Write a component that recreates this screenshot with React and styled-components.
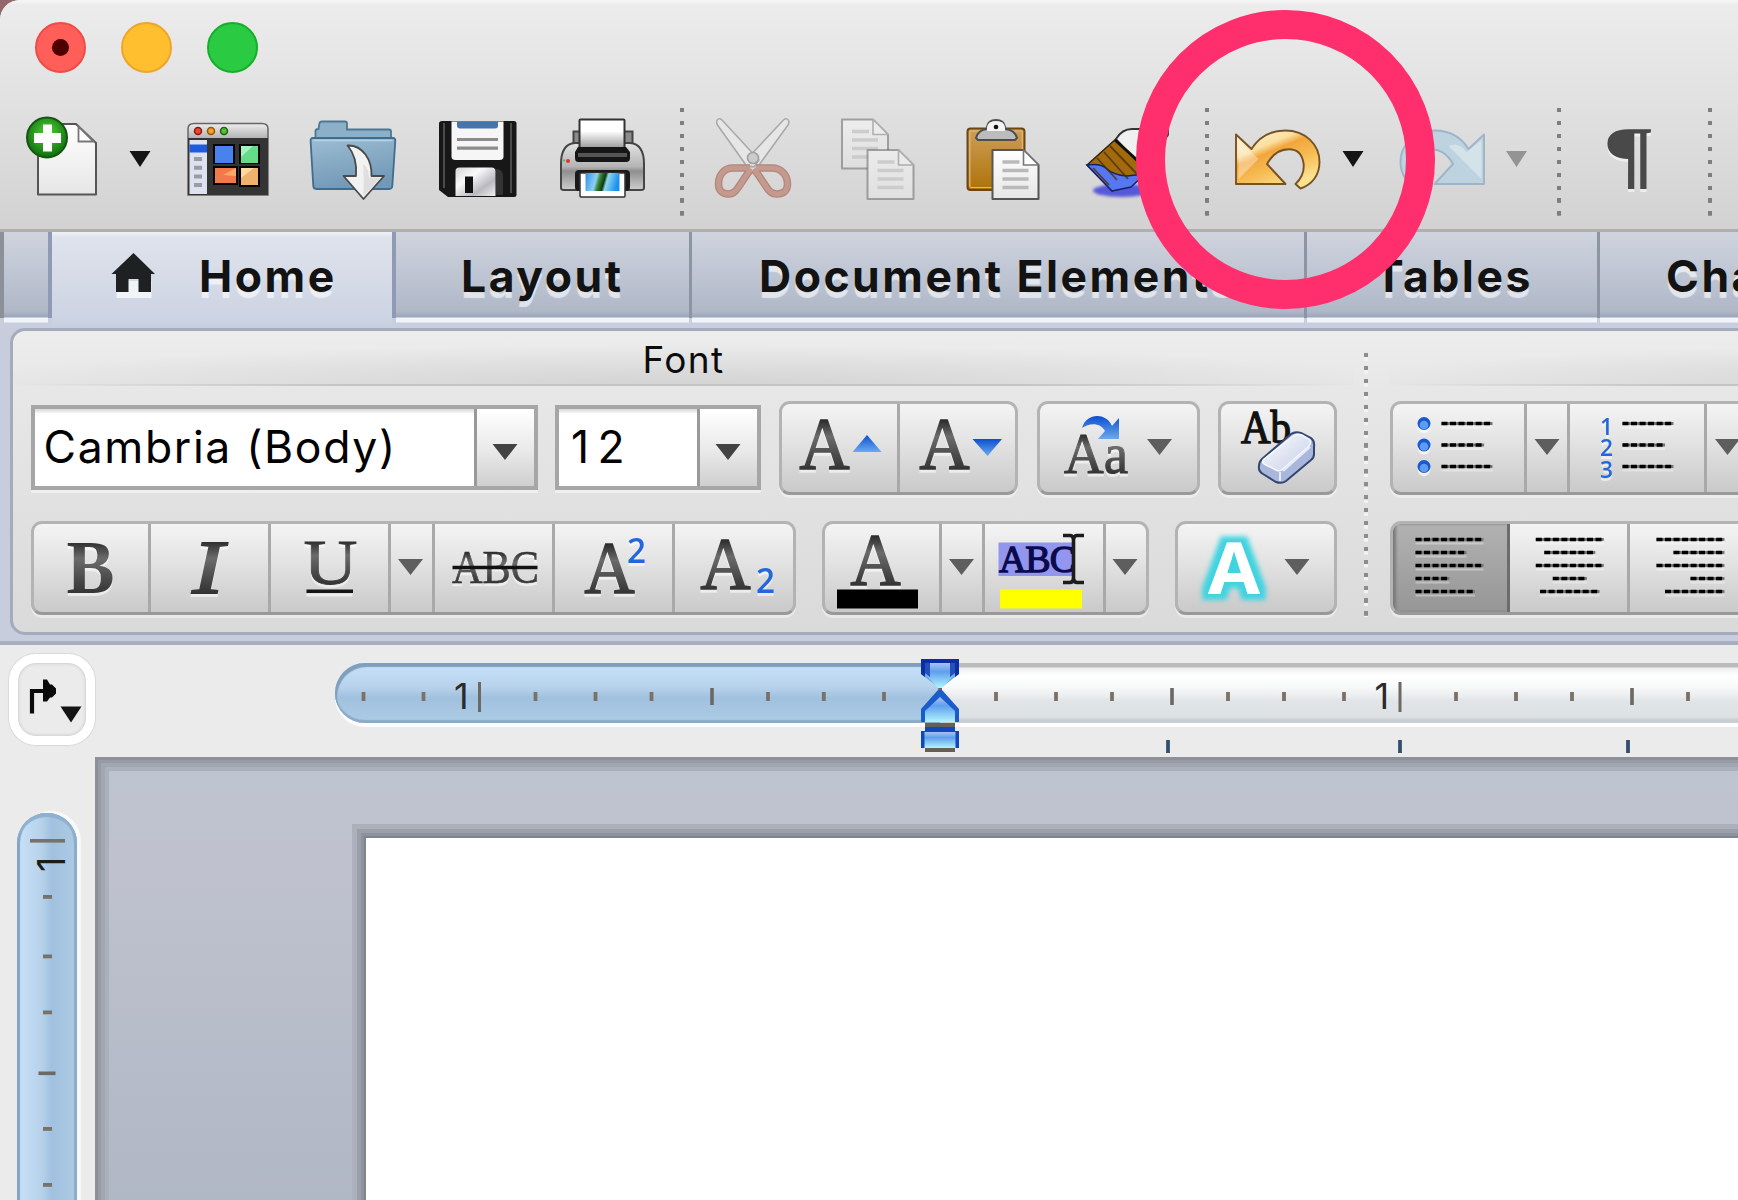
import React from "react";
import styled, { createGlobalStyle } from "styled-components";

const Global = createGlobalStyle`
  html, body { margin: 0; padding: 0; overflow: hidden; }
  *, *::before, *::after { box-sizing: border-box; }
`;

const SERIF = '"Liberation Serif", serif';
const SANS = 'Inter, "Liberation Sans", sans-serif';

const Desktop = styled.div`
  width: 1738px;
  height: 1200px;
  overflow: hidden;
  position: relative;
  background: #93686a;
  font-family: ${SANS};
`;

const Window = styled.div`
  display: flex;
  flex-direction: column;
  width: 1738px;
  height: 1200px;
  overflow: hidden;
  background: #ebebeb;
  border-top-left-radius: 20px;
`;

const Chrome = styled.header`
  flex: none;
  height: 232px;
  background: linear-gradient(#f6f6f6 0, #ececec 5px, #e2e2e2 95px, #d2d2d2 230px);
  border-bottom: 3px solid #b1afab;
`;

const TrafficLights = styled.div`
  display: flex;
  gap: 35px;
  height: 95px;
  padding: 22px 0 0 34.5px;
`;

const Light = styled.div`
  display: flex;
  align-items: center;
  justify-content: center;
  width: 51px;
  height: 51px;
  border-radius: 50%;
  background: ${(p) => p.$fill};
  border: 2px solid ${(p) => p.$edge};
`;

const EditedDot = styled.div`
  width: 17px;
  height: 17px;
  border-radius: 50%;
  background: #4c0000;
`;

const ToolRow = styled.div`
  display: flex;
  height: 134px;
`;

const Drawing = styled.svg`
  display: block;
  flex: none;
  margin-left: ${(p) => p.$gap || 0}px;
  overflow: visible;
`;

/* An icon drawn in window coordinates, cropped to its own slot. */
function Art({ x, y, w, h, gap, children }) {
  return (
    <Drawing $gap={gap} width={w} height={h} viewBox={`${x} ${y} ${w} ${h}`}>
      {children}
    </Drawing>
  );
}

const Dots = styled.div`
  flex: none;
  width: 4px;
  height: ${(p) => p.$h}px;
  margin: ${(p) => p.$top}px 0 0 ${(p) => p.$gap}px;
  background: repeating-linear-gradient(
    ${(p) => p.$ink} 0 4px,
    ${(p) => p.$between} 4.5px 7.5px,
    transparent 8px 12.92px
  );
`;

const Caret = ({ x, y, w = 25, h = 16, fill = "#5e5e5e" }) => (
  <path d={`M${x - w / 2} ${y}h${w}l${-w / 2} ${h}z`} fill={fill} />
);

const Defs = styled.svg`
  display: block;
  width: 0;
  height: 0;
`;

const Gradients = () => (
  <Defs>
    <defs>
      <linearGradient id="ink" x1="0" y1="0" x2="0" y2="1">
        <stop offset="0.2" stopColor="#2c2c2c" />
        <stop offset="0.4" stopColor="#6b6b6b" />
        <stop offset="0.85" stopColor="#2e2e2e" />
      </linearGradient>
      <linearGradient id="blue" x1="0" y1="0" x2="0" y2="1">
        <stop offset="0" stopColor="#0d4fd0" />
        <stop offset="1" stopColor="#6aaaf0" />
      </linearGradient>
      <linearGradient id="paper" x1="0" y1="0" x2="0" y2="1">
        <stop offset="0" stopColor="#fff" />
        <stop offset="1" stopColor="#e6e6e6" />
      </linearGradient>
      <linearGradient id="sheetFade" x1="0" y1="0" x2="0" y2="1">
        <stop offset="0.4" stopColor="#fff" />
        <stop offset="1" stopColor="#999" />
      </linearGradient>
      <radialGradient id="green" cx="0.5" cy="0.4" r="0.6">
        <stop offset="0.3" stopColor="#3fb52c" />
        <stop offset="1" stopColor="#0d6d0c" />
      </radialGradient>
      <linearGradient id="bar" x1="0" y1="0" x2="0" y2="0.25">
        <stop offset="0" stopColor="#eee" />
        <stop offset="1" stopColor="#a6a6a6" />
      </linearGradient>
      <linearGradient id="folder" x1="0" y1="0" x2="0.3" y2="1">
        <stop offset="0" stopColor="#9dbdd3" />
        <stop offset="1" stopColor="#7299b7" />
      </linearGradient>
      <linearGradient id="silver" x1="0" y1="0" x2="1" y2="1">
        <stop offset="0" stopColor="#d4d4d9" />
        <stop offset="0.35" stopColor="#fafafa" />
        <stop offset="0.7" stopColor="#b9b9c0" />
        <stop offset="1" stopColor="#f2f2f2" />
      </linearGradient>
      <linearGradient id="printer" x1="0" y1="0" x2="0" y2="1">
        <stop offset="0" stopColor="#e3e3e3" />
        <stop offset="0.5" stopColor="#b5b5b5" />
        <stop offset="0.6" stopColor="#8e8e8e" />
        <stop offset="1" stopColor="#cfcfcf" />
      </linearGradient>
      <linearGradient id="photo" x1="0" y1="0" x2="1" y2="0.15">
        <stop offset="0" stopColor="#2f8fe6" />
        <stop offset="0.35" stopColor="#8fd0f4" />
        <stop offset="0.45" stopColor="#3c8a3a" />
        <stop offset="0.6" stopColor="#0c3a10" />
        <stop offset="0.68" stopColor="#8ed6ee" />
        <stop offset="1" stopColor="#1e90f2" />
      </linearGradient>
      <linearGradient id="board" x1="0" y1="0" x2="0" y2="1">
        <stop offset="0" stopColor="#cf9f58" />
        <stop offset="1" stopColor="#ad7208" />
      </linearGradient>
      <linearGradient id="gold" gradientUnits="userSpaceOnUse" x1="1255" y1="130" x2="1280" y2="190">
        <stop offset="0" stopColor="#fdf0cf" />
        <stop offset="0.28" stopColor="#fadf9f" />
        <stop offset="0.4" stopColor="#f2a63c" />
        <stop offset="0.65" stopColor="#f6bb52" />
        <stop offset="1" stopColor="#fce28f" />
      </linearGradient>
      <linearGradient id="eraser" x1="0" y1="0" x2="1" y2="1">
        <stop offset="0" stopColor="#fff" />
        <stop offset="1" stopColor="#c2cbe6" />
      </linearGradient>
      <linearGradient id="markerDown" x1="0" y1="0" x2="0" y2="1">
        <stop offset="0" stopColor="#a9c4f4" />
        <stop offset="0.35" stopColor="#5f9fec" />
        <stop offset="1" stopColor="#b2f4ff" />
      </linearGradient>
      <filter id="soft" x="-50%" y="-50%" width="200%" height="200%">
        <feGaussianBlur stdDeviation="1.5" />
      </filter>
      <filter id="halo" x="-50%" y="-50%" width="200%" height="200%">
        <feMorphology in="SourceAlpha" operator="dilate" radius="6" />
        <feGaussianBlur stdDeviation="2.6" result="spread" />
        <feFlood floodColor="#3fd4e0" />
        <feComposite in2="spread" operator="in" />
        <feMerge>
          <feMergeNode />
          <feMergeNode in="SourceGraphic" />
        </feMerge>
      </filter>
    </defs>
  </Defs>
);

const Sheet = ({ x, y }) => (
  <g>
    <path d={`M${x} ${y}h31l15 15v34h-46z`} fill="url(#paper)" stroke="#555" strokeWidth="2" strokeLinejoin="round" />
    <path d={`M${x + 31} ${y}v15h15z`} fill="#fff" stroke="#777" strokeWidth="1.6" strokeLinejoin="round" />
    <path
      d={`M${x + 10} ${y + 12}h17M${x + 10} ${y + 20.5}h26M${x + 10} ${y + 29}h26M${x + 10} ${y + 37.5}h26`}
      stroke="#b9b9b9"
      strokeWidth="3.4"
    />
  </g>
);

const UNDO =
  "M1236 134.5L1251.5 149C1259 137 1271 130.5 1285 130.5C1306 130.5 1319.5 145 1319.5 162C1319.5 175 1312 185 1300.5 188.5L1295.5 184C1302 178 1304.5 170 1303.5 163C1302 154 1297 149.3 1289 149.3C1280 149.3 1272 155 1267 164L1285.5 184H1236Z";

const HANDLES =
  "M750 168H733C724 168 718.500 175 718.500 184C718.500 191 723 194 728 194C737 194 738 186 751 169M756 168H772C781 168 787.500 175 787.500 184C787.500 191 783 194 777 194C768 194 767 186 754 169";

const Embossed = styled.g`
  filter: drop-shadow(0 3px 0 rgba(255, 255, 255, 0.55));
`;

function Toolbar() {
  const T = { y: 95, h: 134 };
  return (
    <ToolRow>
      <Art x={24} w={76} gap={24} {...T}>
        <path d="M38 124h38l20 19v51.500h-58z" fill="url(#paper)" stroke="#555" strokeWidth="2" strokeLinejoin="round" />
        <path d="M78.500 126.500v15h15z" fill="#fff" stroke="#777" strokeWidth="1.800" />
        <circle cx="47" cy="137.500" r="20" fill="url(#green)" stroke="#155512" strokeWidth="2" />
        <path d="M43 124.500h9v8.500h9v10h-9v8.500h-9v-8.500h-9v-10h9z" fill="#fff" />
      </Art>
      <Art x={129} w={22} gap={29} {...T}>
        <Caret x={140} y={151} w={21} fill="#141414" />
      </Art>
      <Art x={187} w={82} gap={36} {...T}>
        <path d="M188 195v-66q0-5.500 6-5.500h68q6 0 6 5.500v66z" fill="url(#bar)" stroke="#666" strokeWidth="1.500" />
        <rect x="188" y="138" width="80" height="57" fill="#343434" />
        <rect x="189.500" y="140" width="17.500" height="54" fill="#dee2f0" />
        <rect x="189.500" y="144.500" width="17.500" height="8" fill="#1f5cdd" />
        <path d="M194 159h8M194 167.700h8M194 176.400h8M194 185h8" stroke="#999ba6" strokeWidth="4" />
        <circle cx="198" cy="131" r="3.500" fill="#e8492f" stroke="#8d1712" strokeWidth="1.500" />
        <circle cx="211" cy="131" r="3.500" fill="#eda32c" stroke="#965209" strokeWidth="1.500" />
        <circle cx="224" cy="131" r="3.500" fill="#5cbb38" stroke="#1a6410" strokeWidth="1.500" />
        <path d="M213 144h22v20h-22zM239 144h21v20h-21zM213 166h25v19h-25zM239 166h21v21h-21z" fill="#050505" />
        <rect x="215" y="146" width="18" height="17" fill="#4683ea" />
        <rect x="241" y="146" width="17" height="17" fill="#66dc8b" />
        <path d="M241 146h12l-12 11z" fill="#a8f2c0" />
        <rect x="215" y="168" width="21" height="15" fill="#f17a48" />
        <path d="M223 175l13-7v8z" fill="#ffa765" />
        <rect x="241" y="168" width="17" height="17" fill="#f0b16c" />
        <path d="M241 168h13l-13 10z" fill="#ffd9a0" />
      </Art>
      <Art x={309} w={88} gap={40} {...T}>
        <path d="M315.500 142v-11q0-2 3-2l1-6q.5-1.500 2.500-1.500h23q2 0 2 2v6h42q2 0 2 2v11z" fill="#8db0c9" stroke="#4d7792" strokeWidth="1.800" />
        <path d="M313 138h80q2.500 0 2.300 3l-3 45q-.3 3-3 3h-73q-2.800 0-3-3l-2.700-45q-.2-3 2.400-3z" fill="url(#folder)" stroke="#3f6d8d" strokeWidth="1.800" />
        <path d="M313.500 140.500h79" stroke="#b4d3e5" strokeWidth="1.500" />
        <path d="M347.500 145.500C363 145 372 160 371.500 176H384L363.500 199L343.500 176H356C357 164 354 153 347.500 145.500Z" fill="#f2f2f2" stroke="#4a4a4a" strokeWidth="1.800" strokeLinejoin="round" />
        <path d="M363 164q1 9 .5 32l17-18.500h-11.500q0-9-6-13.500" fill="#dfdfdf" />
      </Art>
      <Art x={439} w={78} gap={42} {...T}>
        <path d="M441 196h72" stroke="#777" strokeWidth="4" filter="url(#soft)" />
        <path d="M442 121h72q2.500 0 2.500 2.500v71q0 2.500-2.500 2.500h-66l-9-7v-66.500q0-2.500 3-2.500z" fill="#171717" />
        <path d="M444 123v65M511 123v70" stroke="#4b4b4b" strokeWidth="2" />
        <path d="M451.500 121.500h52v35q0 3.500-4 3.500h-44q-4 0-4-3.500z" fill="#f6f6f6" />
        <path d="M457 121.500h41v4q0 3-3 3h-35q-3 0-3-3z" fill="#4674ad" />
        <path d="M457 139.500h41M457 148.200h41" stroke="#8c8c8c" strokeWidth="3.200" />
        <path d="M455.500 196v-25q0-3.500 4-3.500h32q4 0 4 3.500v25z" fill="url(#silver)" />
        <path d="M496 169q7 0 7 7v19h-7z" fill="#333" />
        <rect x="465" y="176.500" width="8" height="16.500" fill="#111" />
      </Art>
      <Art x={559} w={87} gap={42} {...T}>
        <path d="M573.500 131.500h59v14h-59z" fill="#8c8c8c" stroke="#454545" strokeWidth="2" />
        <path d="M561 188v-24q0-20 14-21h55q14 1 14 21v24q0 2-3 2h-77q-3 0-3-2z" fill="url(#printer)" stroke="#454545" strokeWidth="2" />
        <rect x="579.500" y="119.500" width="45" height="29" rx="1" fill="url(#sheetFade)" stroke="#333" strokeWidth="2" />
        <path d="M578 147h48l4 5v6q0 4-4 4h-48q-3 0-3-4v-6z" fill="#161616" />
        <path d="M578 153h49v4h-49z" fill="#555" />
        <rect x="575" y="170" width="55" height="21" rx="4" fill="#1a1a1a" />
        <rect x="580" y="173" width="45" height="24" rx="1" fill="#fff" stroke="#333" strokeWidth="1.500" />
        <rect x="585.500" y="173" width="34" height="18" fill="url(#photo)" />
        <circle cx="568" cy="161" r="2" fill="#f02c2c" />
        <circle cx="564" cy="160.500" r="1.200" fill="#4bc36b" />
      </Art>
      <Dots $gap={34} $top={12.5} $h={108} $ink="#7e7e7e" $between="transparent" />
      <Art x={714} w={78} gap={30} {...T}>
        <path d="M717 197h72" stroke="#bbb" strokeWidth="3" filter="url(#soft)" />
        <g fill="#e6e6e6" stroke="#a8a8a8" strokeWidth="1.500">
          <path d="M788.500 120.500q-1.500-3-5-.5L746 160l5 7 8-2 29-40q1.500-2.500.5-4.500z" />
          <path d="M717 120.500q1.500-3 5-.5L759 160l-5 7-8-2-28.500-40q-1.500-2.500-.5-4.500z" />
        </g>
        <g fill="none" strokeLinejoin="round">
          <path d={HANDLES} stroke="#b5847b" strokeWidth="7.500" />
          <path d={HANDLES} stroke="#c49a8e" strokeWidth="5" />
        </g>
        <circle cx="753" cy="158" r="5.500" fill="#ccc" stroke="#a0a0a0" strokeWidth="1.600" />
      </Art>
      <Art x={841} w={74} gap={49} {...T}>
        <g opacity="0.450">
          <Sheet x={842} y={119.5} />
        </g>
        <path d="M867.500 150h31l15 15v34h-46z" fill="#dcdcdc" />
        <g opacity="0.450">
          <Sheet x={867.5} y={150} />
        </g>
      </Art>
      <Art x={966} w={74} gap={51} {...T}>
        <rect x="967.500" y="128.500" width="57" height="61.500" rx="3" fill="url(#board)" stroke="#6b4715" strokeWidth="2" />
        <rect x="969.800" y="131" width="52.500" height="56.500" rx="1.500" fill="none" stroke="#e0b97c" strokeWidth="1.200" />
        <path d="M976 138q2-8 11-9v-2q1-7 9-7t9 7v2q10 1 12 9l-2 2h-37z" fill="#bcbcbc" stroke="#4e4e4e" strokeWidth="2" />
        <path d="M987 131v-4q1-6 9-6t9 6v4z" fill="#f3f3f3" />
        <circle cx="996" cy="127" r="2.300" fill="#111" />
        <Sheet x={992.5} y={150} />
      </Art>
      <Art x={1085} w={86} gap={45} {...T}>
        <ellipse cx="1122" cy="190.500" rx="29" ry="6.500" fill="#5659da" filter="url(#soft)" />
        <path d="M1087 165L1117 138L1147 168L1131 186L1112 191Z" fill="#a36a0c" stroke="#2f210c" strokeWidth="1.500" />
        <path d="M1087 165q14-2 20 4t20 7l18-2-14 13-19 4z" fill="#5577f2" stroke="#15206a" strokeWidth="1.500" />
        <path d="M1097 158l20 22M1104 152l24 27M1110 146l28 29M1093 168l16 17" stroke="#4a3008" strokeWidth="1.800" opacity="0.800" />
        <path d="M1116 139q6-10 16-10l36 0v6l-24 34z" fill="#f0f0f0" stroke="#333" strokeWidth="1.800" />
        <path d="M1115 140l33 30" stroke="#111" strokeWidth="3" />
      </Art>
      <Dots $gap={34} $top={12.5} $h={108} $ink="#7e7e7e" $between="transparent" />
      <Art x={1234} w={88} gap={25} {...T}>
        <path d={UNDO} fill="url(#gold)" stroke="#775225" strokeWidth="1.900" strokeLinejoin="round" />
        <path d="M1238.500 140v39l20-20z" fill="#fff" opacity="0.350" />
      </Art>
      <Art x={1342} w={22} gap={20} {...T}>
        <Caret x={1353} y={151} w={21} fill="#141414" />
      </Art>
      <Art x={1398} w={88} gap={34} {...T}>
        <path d={UNDO} transform="translate(2720 0) scale(-1 1)" fill="#bdd3df" stroke="#9fb4c8" strokeWidth="1.900" strokeLinejoin="round" />
        <path d="M1481.500 140v39l-33-33q10-5 18 6z" fill="#fff" opacity="0.350" />
      </Art>
      <Art x={1506} w={22} gap={20} {...T}>
        <Caret x={1516.5} y={151} w={21} fill="#949494" />
      </Art>
      <Dots $gap={29} $top={12.5} $h={108} $ink="#7e7e7e" $between="transparent" />
      <Art x={1606} w={48} gap={45} {...T}>
        <Embossed>
          <text x="1608" y="179" fontFamily={SERIF} fontSize="74" textLength="43" lengthAdjust="spacingAndGlyphs" fill="#494949" stroke="#494949" strokeWidth="1.500">¶</text>
        </Embossed>
      </Art>
      <Dots $gap={54} $top={12.5} $h={108} $ink="#7e7e7e" $between="transparent" />
    </ToolRow>
  );
}

/* ---------- Tabs ---------- */

const TabStrip = styled.nav`
  display: flex;
  flex: none;
  height: 96px;
  background: #c8cedd;
`;

const Tab = styled.div`
  flex: none;
  display: flex;
  align-items: flex-start;
  width: ${(p) => p.$w}px;
  height: ${(p) => (p.$active ? 96 : 91)}px;
  padding: 19px 0 0 ${(p) => p.$pad || 0}px;
  background: ${(p) =>
    p.$active
      ? "linear-gradient(#eff2f8 0, #dfe3ec 5px, #ccd3e2 88px, #c8cedd 96px)"
      : "linear-gradient(#cfd4de 0, #b0b8c8 79px, #9ca5b9 85px, #f1f4f9 86px, #f1f4f9 90px, #c8cedd 91px)"};
`;

const TabEdge = styled.div`
  flex: none;
  width: ${(p) => p.$w}px;
  height: 86px;
  background: ${(p) => p.$c};
`;

const TabLabel = styled.span`
  margin-top: -1px;
  font: 650 44.5px/53px ${SANS};
  letter-spacing: 2.5px;
  color: #131313;
  white-space: nowrap;
  text-shadow: 0 6px 1px rgba(255, 255, 255, 0.6);
`;

const HomeLabel = styled(TabLabel)`
  margin-left: 42px;
`;

const tabs = [
  { label: "Layout", w: 293, pad: 65 },
  { label: "Document Elements", w: 612, pad: 67 },
  { label: "Tables", w: 290, pad: 67 },
  { label: "Charts", w: 180, pad: 66 },
];

function Tabs() {
  return (
    <TabStrip>
      <TabEdge $w={4} $c="#8c9098" />
      <Tab $w={44} />
      <TabEdge $w={4} $c="#8f9bb5" />
      <Tab $active $w={340} $pad={59}>
        <Art x={111} y={251} w={46} h={53}>
          <path d="M116.500 281v17h35v-17z" fill="#f0f3f8" />
          <path d="M133.500 253L155 274H151V292H138.500V279H128.500V292H116V274H111.500Z" fill="#1f2022" />
        </Art>
        <HomeLabel>Home</HomeLabel>
      </Tab>
      <TabEdge $w={4} $c="#8f9bb5" />
      {tabs.map((t, i) => (
        <React.Fragment key={t.label}>
          {i > 0 && <TabEdge $w={3} $c="#8d94a2" />}
          <Tab $w={t.w} $pad={t.pad}>
            <TabLabel>{t.label}</TabLabel>
          </Tab>
        </React.Fragment>
      ))}
    </TabStrip>
  );
}

/* ---------- Ribbon ---------- */

const RibbonFrame = styled.section`
  flex: none;
  height: 317px;
  padding-left: 10px;
  background: #c7cddc;
  border-bottom: 4px solid #a7aec0;
`;

const Ribbon = styled.div`
  display: flex;
  height: 307px;
  width: 1760px;
  border: 3px solid #a4abba;
  border-radius: 15px;
  background: linear-gradient(#ededed, #e7e7e7 60px, #dadada);
`;

const Group = styled.div`
  flex: none;
  width: ${(p) => p.$w}px;
  padding-left: ${(p) => p.$pad}px;
`;

const GroupTitle = styled.h2`
  height: 56px;
  margin: 0 0 0 ${(p) => p.$shift}px;
  width: ${(p) => p.$w}px;
  padding-top: 7px;
  font: 400 37px/44px ${SANS};
  letter-spacing: 1.4px;
  text-align: center;
  color: #0c0c0c;
  background:
    linear-gradient(90deg, transparent, #c4c4c4 25%, #c4c4c4 75%, transparent) 0 53px / 100% 2px no-repeat,
    radial-gradient(ellipse 55% 75% at 50% 100%, #d3d3d3, transparent) 0 0 / 100% 54px no-repeat;
`;

const ControlRow = styled.div`
  display: flex;
  align-items: center;
  height: 94px;
  margin-top: ${(p) => p.$top}px;
`;

const Combo = styled.div`
  display: flex;
  flex: none;
  width: ${(p) => p.$w}px;
  height: 85px;
  margin: -2px ${(p) => p.$after}px 0 0;
  border: 4px solid #a6a6a6;
  background: #fff;
  box-shadow: 0 3px 0 rgba(255, 255, 255, 0.45);
`;

const ComboValue = styled.div`
  flex: 1;
  padding: 12px 0 0 ${(p) => p.$pad}px;
  font: 400 44.5px/53px ${SANS};
  letter-spacing: ${(p) => p.$track}px;
  color: #000;
  white-space: nowrap;
  box-shadow: inset 0 5px 3px -2px #ddd;
`;

const ComboArrow = styled.div`
  flex: none;
  width: 60px;
  border-left: 3px solid #999;
  background: linear-gradient(#fff, #e9e9e9 55%, #cfcfcf);
`;

const ButtonGroup = styled.div`
  display: flex;
  flex: none;
  height: 94px;
  border: 3px solid #b3b3b3;
  border-bottom-color: #999;
  border-radius: 11px;
  overflow: hidden;
  background: linear-gradient(#f4f4f4, #e2e2e2 45%, #cacaca);
`;

const GroupShadow = styled.div`
  flex: none;
  margin-right: ${(p) => p.$after || 0}px;
  border-radius: 11px;
  box-shadow: 0 3px 0 rgba(255, 255, 255, 0.4);
`;

const Segment = styled.div`
  flex: none;
  width: ${(p) => p.$w}px;
  height: 88px;
  border-right: ${(p) => (p.$last ? 0 : 3)}px solid ${(p) => (p.$pressed ? "#6c6c6c" : "#a9a9a9")};
  background: ${(p) => (p.$pressed ? "linear-gradient(#b2b2b2, #969696)" : "transparent")};
  box-shadow: ${(p) => (p.$pressed ? "inset 3px 0 3px #7a7a7a" : "none")};
`;

function Buttons({ x, y, parts, after }) {
  let left = x + 3;
  return (
    <GroupShadow $after={after}>
      <ButtonGroup>
        {parts.map(([w, art, pressed], i) => {
          const at = left;
          left += w;
          return (
            <Segment key={i} $w={w} $last={i === parts.length - 1} $pressed={pressed}>
              <Art x={at} y={y} w={w - 3} h={88}>
                {art}
              </Art>
            </Segment>
          );
        })}
      </ButtonGroup>
    </GroupShadow>
  );
}

/* A letter on a button, with the light line that sits under it. */
function Glyph({ x, y, w, size, family = SERIF, weight = 400, heavy = 0, italic, fill = "url(#ink)", children }) {
  return (
    <Embossed>
      <text
        x={x}
        y={y}
        fontFamily={family}
        fontSize={size}
        fontWeight={weight}
        fontStyle={italic ? "italic" : "normal"}
        textLength={w}
        lengthAdjust="spacingAndGlyphs"
        fill={fill}
        stroke={fill}
        strokeWidth={heavy}
      >
        {children}
      </text>
    </Embossed>
  );
}

const Dash = ({ x, y, w }) => (
  <g>
    <path d={`M${x} ${y + 4}h${w}`} stroke="#fff" strokeWidth="2" opacity="0.350" />
    <path d={`M${x} ${y}h${w}`} stroke="#777" strokeWidth="3" />
    <path d={`M${x} ${y}h${w}`} stroke="#000" strokeWidth="3.600" strokeDasharray="6 2.530" />
  </g>
);

const Lines = ({ at }) => (
  <g>
    {[68, 51, 68, 34, 59.5].map((w, i) => (
      <Dash key={i} x={at(w)} y={539.5 + i * 13} w={w} />
    ))}
  </g>
);

const BigA = ({ x, y }) => (
  <Glyph x={x} y={y} w={50} size={73} heavy={1.7}>A</Glyph>
);

const blueText = { family: '"Open Sans", sans-serif', weight: 600, fill: "#2467db" };

const rowOne = {
  size: [
    [118, <><BigA x={799.5} y={469} /><path d="M852.500 452h29l-14.500-17z" fill="url(#blue)" /></>],
    [115, <><BigA x={919.5} y={469} /><path d="M972.500 439h29.500l-14.500 17z" fill="url(#blue)" /></>],
  ],
  change: [
    [157, <>
      <Glyph x={1064} y={473} w={64} size={57} heavy={1}>Aa</Glyph>
      <path d="M1082 428C1086 413 1106 412 1112 426L1119 418V439H1098L1105 431C1100 422 1089 423 1082 428Z" fill="url(#blue)" />
      <Caret x={1159.5} y={439} />
    </>],
  ],
  clear: [
    [113, <>
      <text x="1241" y="443" fontFamily={SERIF} fontSize="47" textLength="50" lengthAdjust="spacingAndGlyphs" fill="#111" stroke="#111" strokeWidth="1.400">Ab</text>
      <path d="M1291 434Q1295 431 1301 433L1311 438Q1315 441 1314 447V454Q1314 458 1311 460L1286 481Q1282 484 1276 482L1263 474Q1258 471 1259 466Q1259 462 1262 459Z" fill="#a9b7dc" stroke="#34466f" strokeWidth="2" />
      <path d="M1293 436Q1297 433 1302 435L1309 439Q1312 442 1309 446L1283 469Q1280 472 1276 470L1264 464Q1261 462 1264 459Z" fill="url(#eraser)" stroke="#f6f8ff" strokeWidth="1.500" />
      <path d="M1280 472v9M1310 447l-27 24" stroke="#e6ecfb" strokeWidth="2" />
    </>],
  ],
  lists: [
    [133.5, <>
      {[423.5, 445, 466.5].map((cy, i) => (
        <g key={cy}>
          <circle cx="1424" cy={cy + 3} r="6.500" fill="#fff" opacity="0.700" />
          <circle cx="1424" cy={cy} r="6.500" fill="#1858d2" />
          <circle cx="1424" cy={cy + 1.5} r="4.300" fill="#5e9cec" />
          <Dash x={1441.5} y={cy} w={i === 1 ? 42.6 : 51} />
        </g>
      ))}
    </>],
    [43, <Caret x={1546.5} y={439} />],
    [137, <>
      {[423.5, 445, 466.5].map((cy, i) => (
        <g key={cy}>
          <Glyph x={1599.5} y={cy + 11} w={13} size={23} {...blueText}>{i + 1}</Glyph>
          <Dash x={1622} y={cy} w={i === 1 ? 42.6 : 51} />
        </g>
      ))}
    </>],
    [60, <Caret x={1727} y={439} />],
  ],
};

const rowTwo = {
  style: [
    [117, <Glyph x={66} y={593} w={48} size={77} weight={700}>B</Glyph>],
    [120, <Glyph x={192} y={592.5} w={31} size={76} italic heavy={2.2}>I</Glyph>],
    [120.5, <>
      <Glyph x={303} y={584} w={54} size={64} heavy={0.8}>U</Glyph>
      <path d="M306 595h46" stroke="#fff" strokeWidth="3" opacity="0.600" />
      <path d="M306 591.300h46.500" stroke="#151515" strokeWidth="3.600" />
    </>],
    [43.5, <Caret x={410.5} y={559} />],
    [120.5, <>
      <Glyph x={451.5} y={583} w={87} size={46} heavy={0.6}>ABC</Glyph>
      <path d="M452 567.500h85" stroke="#111" strokeWidth="3.600" />
    </>],
    [120, <>
      <BigA x={584.5} y={593} />
      <Glyph x={627} y={562.5} w={19} size={34} {...blueText}>2</Glyph>
    </>],
    [118, <>
      <BigA x={700.5} y={589} />
      <Glyph x={756} y={593} w={19} size={34} {...blueText}>2</Glyph>
    </>],
  ],
  colour: [
    [117, <>
      <BigA x={850.5} y={585} />
      <rect x="837" y="589.500" width="81" height="19" fill="#000" />
    </>],
    [43, <Caret x={961.5} y={559} />],
    [121, <>
      <rect x="998.500" y="542.500" width="75" height="33.500" fill="#9296ef" />
      <text x="999" y="572" fontFamily={SERIF} fontSize="38" textLength="76" lengthAdjust="spacing" fill="#0a0a4d" stroke="#0a0a4d" strokeWidth="1.300">ABC</text>
      <path d="M1063 535.500h7q3 0 3.500 4q.5-4 3.500-4h7M1063 582.500h7q3 0 3.500-4q.5 4 3.500 4h7M1073.500 538v42" stroke="#1c1c1c" strokeWidth="3.600" fill="none" />
      <rect x="1000" y="589.500" width="82" height="19" fill="#ff0" />
    </>],
    [40, <Caret x={1125} y={559} />],
  ],
  effects: [
    [156, <>
      <text x="1208" y="593.500" fontFamily={'"Open Sans", sans-serif'} fontSize="72" fontWeight="700" textLength="52" lengthAdjust="spacingAndGlyphs" fill="#fff" filter="url(#halo)">A</text>
      <Caret x={1297} y={559} />
    </>],
  ],
  align: [
    [117, <Lines at={() => 1415.5} />, true],
    [120, <Lines at={(w) => 1569.8 - w / 2} />],
    [150, <Lines at={(w) => 1724.5 - w} />],
  ],
};

function RibbonBar() {
  return (
    <RibbonFrame>
      <Ribbon>
        <Group $w={1351} $pad={17.5}>
          <GroupTitle $w={1340} $shift={-17}>Font</GroupTitle>
          <ControlRow $top={14}>
            <Combo $w={507} $after={17.5}>
              <ComboValue $pad={9} $track={1.65}>Cambria (Body)</ComboValue>
              <ComboArrow>
                <Art x={477.5} y={408} w={56} h={76}><Caret x={505.5} y={443} fill="#424242" /></Art>
              </ComboArrow>
            </Combo>
            <Combo $w={206} $after={18}>
              <ComboValue $pad={12} $track={8.5}>12</ComboValue>
              <ComboArrow>
                <Art x={701} y={408} w={56} h={76}><Caret x={729} y={443} fill="#424242" /></Art>
              </ComboArrow>
            </Combo>
            <Buttons x={779} y={404} after={19} parts={rowOne.size} />
            <Buttons x={1037} y={404} after={18} parts={rowOne.change} />
            <Buttons x={1218} y={404} parts={rowOne.clear} />
          </ControlRow>
          <ControlRow $top={26}>
            <Buttons x={30.5} y={524} after={25.5} parts={rowTwo.style} />
            <Buttons x={822} y={524} after={26} parts={rowTwo.colour} />
            <Buttons x={1175} y={524} parts={rowTwo.effects} />
          </ControlRow>
        </Group>
        <Dots $gap={0} $top={22} $h={264} $ink="#8c8c8c" $between="#f2f2f2" />
        <Group $w={400} $pad={22}>
          <GroupTitle $w={1200} $shift={0} aria-hidden="true" />
          <ControlRow $top={14}>
            <Buttons x={1390} y={404} parts={rowOne.lists} />
          </ControlRow>
          <ControlRow $top={26}>
            <Buttons x={1390} y={524} parts={rowTwo.align} />
          </ControlRow>
        </Group>
      </Ribbon>
    </RibbonFrame>
  );
}

/* ---------- Rulers and document ---------- */

const RulerRow = styled.div`
  display: flex;
  flex: none;
  height: 112px;
`;

const TabStop = styled.div`
  flex: none;
  width: 86px;
  height: 91px;
  margin: 8.5px 0 0 9px;
  border: 9px solid #fff;
  border-radius: 27px;
  background: #ebebeb;
  box-shadow: 0 0 1px 1px #d9d9d9, inset 0 0 3px 1px #cfcfcf;
`;

const HRuler = styled.div`
  flex: none;
  display: flex;
  width: 1420px;
  height: 60px;
  margin: 18px 0 0 240px;
  border-top-left-radius: 30px;
  border-bottom-left-radius: 30px;
  box-shadow: 0 4px 0 #fdfdfd;
  background: linear-gradient(#b9bbbd 0, #b9bbbd 4px, #eee 5px, #fff 12px, #f8f9f9 24px, #e2e5e8 38px, #dde1e4 54px, #c9ced2 57px);
`;

const HMargin = styled.div`
  flex: none;
  width: 605px;
  height: 60px;
  border-radius: 30px 0 0 30px;
  background: linear-gradient(#c6e2f8, #b8d2ec 40%, #a0c1df 58%, #abcae4 95%);
  box-shadow: inset 2px 4px 1px #7f9fbd, inset 0 -3px 1px #8cabc9;
`;

const Scale = styled.svg`
  display: block;
  overflow: visible;
`;

const Body = styled.div`
  display: flex;
  flex: 1;
  min-height: 0;
`;

const VRulerColumn = styled.div`
  flex: none;
  width: 95px;
  padding: 56px 0 0 17px;
`;

const VRuler = styled.div`
  width: 60px;
  height: 420px;
  border-radius: 30px 30px 0 0;
  background: linear-gradient(90deg, #c6e2f8, #b8d2ec 40%, #a0c1df 58%, #abcae4 95%);
  box-shadow: inset 0 4px 1px #8fb0cf, inset 3px 0 1px #84a3c2, inset -3px 0 1px #8cabc9, 4px -2px 1px #f9f9f9;
`;

const Canvas = styled.main`
  flex: 1;
  padding: 81px 0 0 271px;
  background: linear-gradient(#bdc4d0, #bfc2ce 100px, #b0b7c5);
  box-shadow:
    inset 3px 3px 0 #8b9099,
    inset 6px 6px 0 #969ba5,
    inset 10px 10px 0 #a1a6b1,
    inset 14px 14px 0 #aab0bc;
`;

const Page = styled.article`
  height: 400px;
  margin-right: -40px;
  background: #fff;
  box-shadow:
    -2px -2px 0 #7f848e,
    -5px -5px 0 #8d929c,
    -9px -9px 0 #9a9fa9,
    -14px -14px 0 #abb0bb;
`;

const smallTicks = [363.5, 423.5, 535.5, 595.5, 651.5, 768, 823.8, 884, 996, 1056, 1112, 1228, 1284, 1344, 1456, 1516, 1572, 1688];
const tallTicks = [712, 1172, 1632];

function HorizontalRuler() {
  return (
    <HRuler>
      <HMargin>
        <Scale width="605" height="60" viewBox="335 663 605 60">
          {smallTicks.map((x) => <rect key={x} x={x - 1.9} y="692" width="3.800" height="9" fill="#7a7169" />)}
          {tallTicks.map((x) => <rect key={x} x={x - 1.8} y="688" width="3.600" height="17" fill="#6c6863" />)}
          {[479.5, 1400].map((x) => (
            <g key={x}>
              <text x={x - 25.5} y="708.500" fontFamily={SANS} fontSize="36" fill="#2a2a2a">1</text>
              <rect x={x - 1.5} y="682" width="3" height="30" fill="#6c6863" />
            </g>
          ))}
          {[1168, 1400, 1628].map((x) => <rect key={x} x={x - 1.9} y="740" width="3.800" height="13" fill="#35506f" />)}
          <rect x="938.200" y="688" width="3.800" height="9" fill="#6b645c" />
          <path d="M921 659h38v15l-17 13h-4l-17-13z" fill="#6fa6dc" />
          <path d="M921 659h38v15l-4 3v-14h-30v14l-4-3z" fill="#0a2ea6" />
          <path d="M925 663h30v11l-13 14h-4l-13-14z" fill="url(#markerDown)" />
          <path d="M925 663h5v14l-5-4zM955 663h-5v14l5-4z" fill="#2450b8" />
          <path d="M938 690h4l17 19v13h-38v-13z" fill="#1a5ccb" />
          <path d="M940 697l15 14v11h-30v-11z" fill="url(#markerDown)" />
          <rect x="925" y="723" width="30" height="4" fill="#655f58" />
          <path d="M925 727h30v4h4v17h-38v-17h4z" fill="#0d48bc" />
          <rect x="924.500" y="732" width="31" height="16" fill="url(#markerDown)" />
          <rect x="925" y="748" width="30" height="4" fill="#655f58" />
        </Scale>
      </HMargin>
    </HRuler>
  );
}

const Ring = styled.div`
  position: absolute;
  left: 1136px;
  top: 10px;
  width: 299px;
  height: 299px;
  border: 29.5px solid #ff2e6d;
  border-radius: 50%;
`;

export default function App() {
  return (
    <Desktop>
      <Global />
      <Gradients />
      <Window>
        <Chrome>
          <TrafficLights>
            <Light $fill="#ff5f58" $edge="#f04b46"><EditedDot /></Light>
            <Light $fill="#ffbf2f" $edge="#eda52b" />
            <Light $fill="#2acb42" $edge="#14b02a" />
          </TrafficLights>
          <Toolbar />
        </Chrome>
        <Tabs />
        <RibbonBar />
        <RulerRow>
          <TabStop>
            <Art x={18} y={662.5} w={67} h={72}>
              <path d="M32 713V690.500H45" stroke="#0b0b0b" strokeWidth="4.200" fill="none" />
              <path d="M43 679h4l3 5h2l4 4v5l-4 4h-2l-3 4h-4z" fill="#0b0b0b" />
              <Caret x={71} y={706} w={21} fill="#141414" />
            </Art>
          </TabStop>
          <HorizontalRuler />
        </RulerRow>
        <Body>
          <VRulerColumn>
            <VRuler>
              <Scale width="60" height="388" viewBox="17 813 60 388">
                <rect x="30" y="839" width="35" height="3.600" fill="#7a7169" />
                <text transform="translate(65 872) rotate(-90)" fontFamily={SANS} fontSize="38" fill="#1c1c1c">1</text>
                {[897, 956.5, 1012.5, 1129, 1185].map((y) => <rect key={y} x="43" y={y - 2} width="9" height="3.800" fill="#7a7169" />)}
                <rect x="38.500" y="1071.500" width="17" height="3.600" fill="#6c6863" />
              </Scale>
            </VRuler>
          </VRulerColumn>
          <Canvas>
            <Page />
          </Canvas>
        </Body>
      </Window>
      <Ring />
    </Desktop>
  );
}
